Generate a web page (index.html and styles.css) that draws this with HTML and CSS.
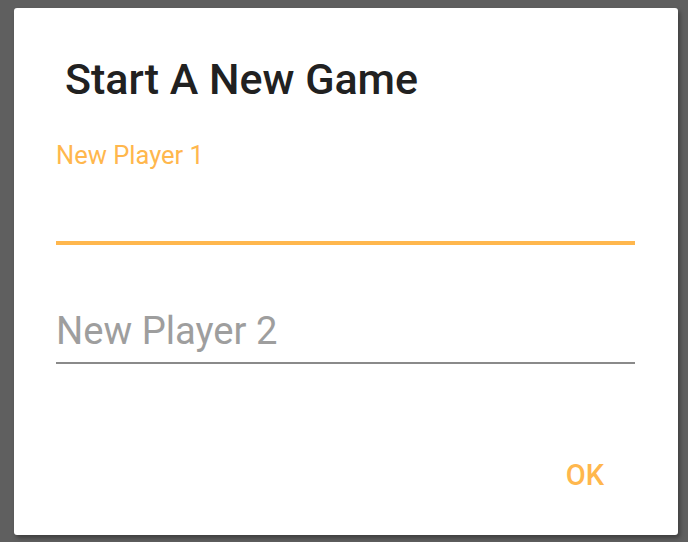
FILE: index.html
```html
<!DOCTYPE html>
<html>
<head>
<meta charset="utf-8">
<link rel="stylesheet" href="styles.css">
</head>
<body>
<div class="dialog">
  <h1 class="title">Start A New Game</h1>
  <div class="field field-active">
    <label class="float-label">New Player 1</label>
    <div class="input"></div>
  </div>
  <div class="field field-idle">
    <div class="input hint">New Player 2</div>
  </div>
  <div class="actions">
    <button class="btn">OK</button>
  </div>
</div>
</body>
</html>
```

FILE: styles.css
```css
html, body {
  margin: 0;
  padding: 0;
  background: #5f5f5f;
  width: 688px;
  height: 542px;
  overflow: hidden;
}
body {
  font-family: Roboto, "Liberation Sans", sans-serif;
}
.dialog {
  box-sizing: border-box;
  margin: 8px 0 0 14px;
  width: 664px;
  height: 527px;
  background: #ffffff;
  border-radius: 3px;
  box-shadow: 2px 3px 4px rgba(0, 0, 0, 0.35);
  padding: 46px 43px 0 42px;
  display: flex;
  flex-direction: column;
}
.title {
  margin: 0 0 0 9px;
  font-size: 43px;
  font-weight: 500;
  line-height: 50px;
  color: #212121;
}
.field-active {
  margin-top: 36px;
}
.float-label {
  display: block;
  font-size: 25.5px;
  line-height: 30px;
  color: #ffb74d;
}
.field-active .input {
  height: 71px;
  border-bottom: 4px solid #ffb74d;
}
.field-idle .input {
  margin-top: 64px;
  line-height: 44px;
  height: 44px;
  padding-bottom: 9px;
  border-bottom: 2px solid #8a8a8a;
  font-size: 38.2px;
  color: #9e9e9e;
}
.actions {
  display: flex;
  justify-content: flex-end;
  margin-top: 94px;
}
.btn {
  border: none;
  background: transparent;
  font-family: Roboto, "Liberation Sans", sans-serif;
  font-weight: 500;
  font-size: 29px;
  line-height: 34px;
  color: #ffb74d;
  padding: 0;
  margin-right: 31px;
}
```
